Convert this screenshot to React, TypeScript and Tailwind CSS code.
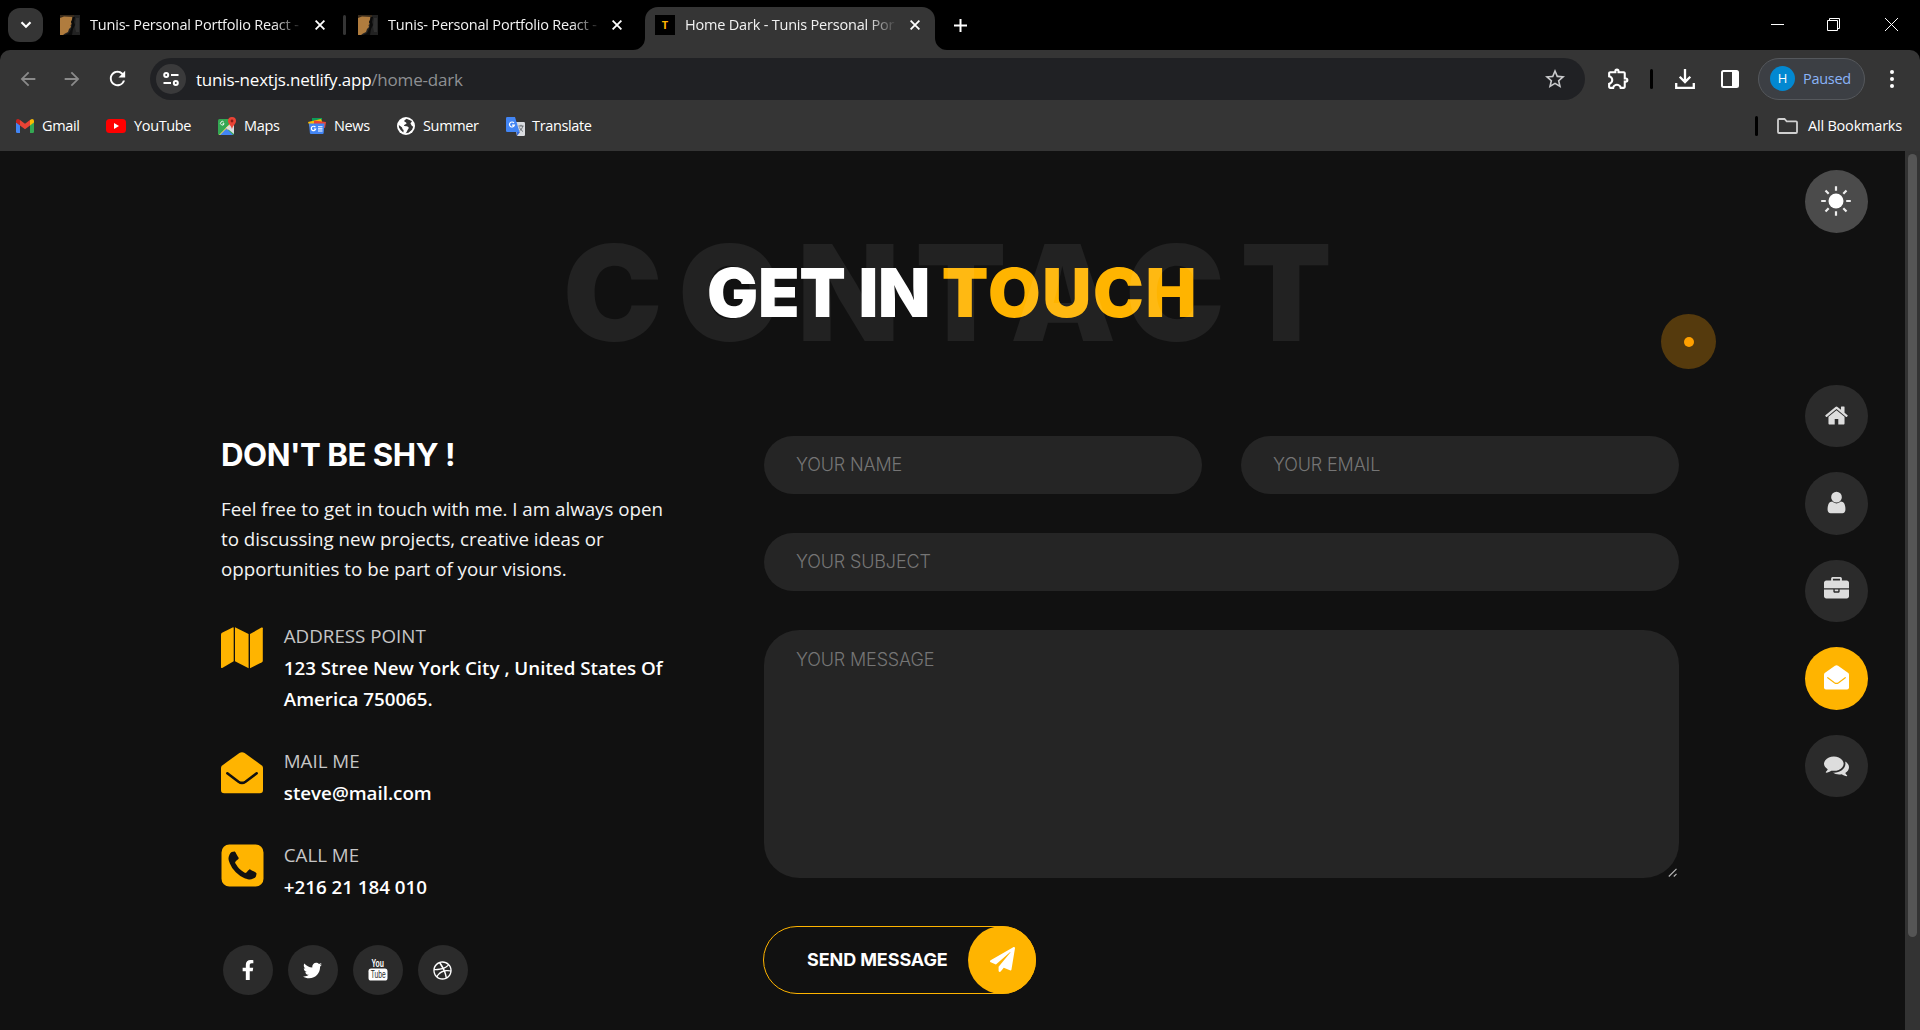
import React from 'react';
import { FaDribbble, FaFacebookF, FaPaperPlane, FaTwitter } from 'react-icons/fa';
import {
  MdArrowBack,
  MdArrowForward,
  MdOutlineExtension,
  MdRefresh,
  MdStarBorder,
} from 'react-icons/md';

const UI_FONT = "font-['Open_Sans','Noto_Sans',sans-serif]";
const HEAD_FONT = "font-['Inter',sans-serif]";

const HOME =
  'M1472 992v480q0 26-19 45t-45 19h-384v-384h-256v384h-384q-26 0-45-19t-19-45v-480q0-1 .5-3t.5-3l575-474 575 474q1 2 1 6zm223-69l-62 74q-8 9-21 11h-3q-13 0-21-7l-692-577-692 577q-12 8-24 7-13-2-21-11l-62-74q-8-10-7-23.5t11-21.5l719-599q32-26 76-26t76 26l244 204v-195q0-14 9-23t23-9h192q14 0 23 9t9 23v408l219 182q10 8 11 21.5t-7 23.5z';
const USER =
  'M1536 1399q0 109-62.5 187t-150.5 78h-854q-88 0-150.5-78t-62.5-187q0-85 8.5-160.5t31.5-152 58.5-131 94-89 134.5-34.5q131 128 313 128t313-128q76 0 134.5 34.5t94 89 58.5 131 31.5 152 8.5 160.5zm-256-887q0 159-112.5 271.5t-271.5 112.5-271.5-112.5-112.5-271.5 112.5-271.5 271.5-112.5 271.5 112.5 112.5 271.5z';
const BRIEFCASE =
  'M640 256h512v-128h-512v128zm1152 640v480q0 66-47 113t-113 47h-1472q-66 0-113-47t-47-113v-480h672v160q0 26 19 45t45 19h320q26 0 45-19t19-45v-160h672zm-768 0v128h-256v-128h256zm768-480v384h-1792v-384q0-66 47-113t113-47h352v-160q0-40 28-68t68-28h576q40 0 68 28t28 68v160h352q66 0 113 47t47 113z';
const COMMENTS =
  'M1408 768q0 139-94 257t-256.5 186.5-353.5 68.5q-86 0-176-16-124 88-278 128-36 9-86 16h-3q-11 0-20.5-8t-11.5-21q-1-3-1-6.5t.5-6.5 2-6l2.5-5 3.5-5.5 4-5 4.5-5 4-4.5q5-6 23-25t26-29.5 22.5-29 25-38.5 20.5-44q-124-72-195-177t-71-224q0-139 94-257t256.5-186.5 353.5-68.5 353.5 68.5 256.5 186.5 94 257zm384 256q0 120-71 224.5t-195 176.5q10 24 20.5 44t25 38.5 22.5 29 26 29.5 23 25q1 1 4 4.5t4.5 5 4 5 3.5 5.5l2.5 5 2 6 .5 6.5-1 6.5q-3 14-13 22t-22 7q-50-7-86-16-154-40-278-128-90 16-176 16-271 0-472-132 58 4 88 4 161 0 309-45t264-129q125-92 192-212t67-254q0-77-23-152 129 71 204 178t75 230z';
const PHONE_SQUARE =
  'M1408 1193q0-11-2-16t-18-16.5-40.5-25-47.5-26.5-45.5-25-28.5-15q-5-3-19-13t-25-15-21-5q-15 0-36.5 20.5t-39.5 45-38.5 45-33.5 20.5q-7 0-16.5-3.5t-15.5-6.5-17-9.5-14-8.5q-99-55-170-126.5t-127-170.5q-2-3-8.5-14t-9.5-17-6.5-15.5-3.5-16.5q0-13 20.5-33.5t45-38.5 45-39.5 20.5-36.5q0-10-5-21t-15-25-13-19q-3-6-15-28.5t-25-45.5-26.5-47.5-25-40.5-16.5-18-16-2q-48 0-101 22-46 21-80 94.5t-34 130.5q0 16 2.5 34t5 30.5 9 33 10 29.5 12.5 33 11 30q60 164 216.5 320.5t320.5 216.5q6 2 30 11t33 12.5 29.5 10 33 9 30.5 5 34 2.5q57 0 130.5-34t94.5-80q22-53 22-101zm256-777v960q0 119-84.5 203.5t-203.5 84.5h-960q-119 0-203.5-84.5t-84.5-203.5v-960q0-119 84.5-203.5t203.5-84.5h960q119 0 203.5 84.5t84.5 203.5z';

function Glyph({ d, className }: { d: string; className: string }) {
  return (
    <svg viewBox="0 0 1792 1792" className={className} fill="currentColor">
      <path d={d} />
    </svg>
  );
}

function OpenEnvelope({ className, line, weight }: { className: string; line: string; weight: number }) {
  return (
    <svg viewBox="0 0 42 42" className={className}>
      <path
        fill="currentColor"
        d="M0 15.8Q0 14.4 1.2 13.4L18.4 1.1Q21-.6 23.6 1.1L40.8 13.4Q42 14.4 42 15.8V38Q42 41.3 38.7 41.3H3.3Q0 41.3 0 38Z"
      />
      <path
        d="M6.3 21.3L17.5 29.7Q21 32.2 24.5 29.7L35.7 21.3"
        fill="none"
        stroke={line}
        strokeWidth={weight}
        strokeLinecap="round"
      />
    </svg>
  );
}

function FoldedMap() {
  return (
    <svg viewBox="0 0 42 42" className="size-[42px]" fill="currentColor">
      <path d="M0 7.5Q0 6.3 1 5.7L11.6.4Q12.7 0 12.7 1V34.3L1.2 40.9Q0 41.5 0 40.3Z" />
      <path d="M14 .2L27.6 7V41.2L14 34.2Z" />
      <path d="M29 7L40.5.6Q41.8 0 41.8 1.2V33.8Q41.8 34.8 40.9 35.3L29 41.2Z" />
    </svg>
  );
}

function YouTubeStack() {
  return (
    <svg
      viewBox="0 0 20 22"
      className="mr-px h-[22px] w-5 overflow-visible"
      fontFamily="'Liberation Sans', sans-serif"
      fontWeight="700"
    >
      <text x="3.5" y="8.3" fontSize="10.5" fill="#fff" textLength="12.5" lengthAdjust="spacingAndGlyphs">
        You
      </text>
      <rect x=".5" y="9.6" width="19" height="12" rx="2.6" fill="#fff" />
      <text x="2.7" y="19.4" fontSize="10.5" fontWeight="400" fill="#2a2a2a" textLength="15" lengthAdjust="spacingAndGlyphs">
        Tube
      </text>
    </svg>
  );
}

function CloseIcon() {
  return (
    <svg viewBox="0 0 10 10" className="size-2.5 shrink-0" stroke="#fff" strokeWidth="1.8">
      <path d="M.6.6l8.8 8.8M9.4.6L.6 9.4" />
    </svg>
  );
}

function PortraitIcon() {
  return (
    <svg viewBox="0 0 20 20" className="size-5 shrink-0">
      <rect width="20" height="20" fill="#222" />
      <path d="M0 2l3-1h10l-1 2 1 2-2 2 1.5 1.5-2 1.5.5 2-2 2-1 3-3 1.5L3 20H0z" fill="#b07c3e" />
      <path d="M0 0h14v2L4 1.5 0 3z" fill="#3a2c1c" />
      <path d="M13 2h2l-1 5 1 3-2 4-1 6H5l4-2 2-4 1-4-1-3z" fill="#0b0b0b" />
      <path d="M16 3h3v14h-3l-1-5z" fill="#303030" />
    </svg>
  );
}

function TabTitle({ text, className }: { text: string; className: string }) {
  return (
    <span
      className={`${className} whitespace-nowrap text-[14.5px] leading-5 tracking-[-0.2px] text-[#f2f2f2] [mask-image:linear-gradient(to_right,#000_86%,transparent)]`}
    >
      {text}
    </span>
  );
}

function TabStrip() {
  return (
    <div className="flex h-[50px] items-start bg-black">
      <div className="mt-2 ml-2 flex h-[34px] w-[35px] items-center justify-center rounded-xl bg-[#353535]">
        <svg viewBox="0 0 12 8" className="mb-px h-2 w-3" fill="none" stroke="#fff" strokeWidth="2.2">
          <path d="M1.5 1.3L6 5.8l4.5-4.5" />
        </svg>
      </div>
      <div className="ml-[17px] flex h-[50px] w-[283px] items-center">
        <PortraitIcon />
        <TabTitle text="Tunis- Personal Portfolio React -" className="ml-[10px] w-[213px]" />
        <span className="ml-[12px] flex">
          <CloseIcon />
        </span>
      </div>
      <div className="mt-[15px] h-5 w-[3px] rounded-full bg-[#353535]" />
      <div className="ml-[12px] flex h-[50px] w-[276px] items-center">
        <PortraitIcon />
        <TabTitle text="Tunis- Personal Portfolio React -" className="ml-[10px] w-[213px]" />
        <span className="ml-[11px] flex">
          <CloseIcon />
        </span>
      </div>
      <svg viewBox="0 0 12 12" className="-ml-px mt-[38px] size-3" fill="#353535">
        <path d="M0 12A12 12 0 0 0 12 0V12z" />
      </svg>
      <div className="mt-[7px] flex h-[43px] w-[290px] items-center rounded-t-[13px] bg-[#353535] pb-[7px] pl-2.5">
        <span className="flex size-5 items-center justify-center bg-black text-[11px] font-bold text-[#ffb400]">T</span>
        <TabTitle text="Home Dark - Tunis Personal Por" className="ml-2.5 w-[212px]" />
        <span className="ml-[13px] flex">
          <CloseIcon />
        </span>
      </div>
      <svg viewBox="0 0 12 12" className="mt-[38px] size-3" fill="#353535">
        <path d="M12 12A12 12 0 0 1 0 0V12z" />
      </svg>
      <svg viewBox="0 0 13 13" className="mt-[18.5px] ml-[7px] size-[13px]" stroke="#fff" strokeWidth="2">
        <path d="M6.5 0v13M0 6.5h13" />
      </svg>
      <div className="mt-[18px] mr-[22px] ml-auto flex items-center">
        <svg viewBox="0 0 13 13" className="size-[13px]" stroke="#fff">
          <path d="M0 6.5h13" />
        </svg>
        <svg viewBox="0 0 13 13" className="ml-[43px] size-[13px]" stroke="#fff" fill="none">
          <path d="M.5 2.5h10v10H.5zM2.5 2.5v-2h10v10h-2" />
        </svg>
        <svg viewBox="0 0 13 13" className="ml-[45px] size-[13px]" stroke="#fff">
          <path d="M0 0l13 13M13 0L0 13" />
        </svg>
      </div>
    </div>
  );
}

function Toolbar() {
  return (
    <div className="flex h-[57px] items-center">
      <MdArrowBack className="ml-[17px] size-[22px] text-[#8a8a8a]" />
      <MdArrowForward className="ml-[22px] size-[22px] text-[#8a8a8a]" />
      <MdRefresh className="ml-[23px] size-[23px] text-white" />
      <div className="ml-[21px] flex h-[42px] w-[1435px] items-center rounded-full bg-[#202124]">
        <span className="ml-[6px] flex size-[30px] items-center justify-center rounded-full bg-[#3a3a3b]">
          <svg viewBox="0 0 16 14" className="h-3.5 w-4" fill="none" stroke="#fff" strokeWidth="2">
            <circle cx="3.2" cy="3" r="2" />
            <path d="M8 3h7.5M.5 11H8" />
            <circle cx="12.8" cy="11" r="2" />
          </svg>
        </span>
        <span className="mt-0.5 ml-[10px] whitespace-nowrap text-[17px] leading-6 tracking-[-0.2px] text-white">
          tunis-nextjs.netlify.app<span className="text-[#8e9093]">/home-dark</span>
        </span>
        <MdStarBorder className="mr-[18px] ml-auto size-6 text-[#c9cacc]" />
      </div>
      <MdOutlineExtension className="ml-[21px] size-[25px] text-white" />
      <div className="ml-[19px] h-5 w-[3px] rounded-full bg-black" />
      <svg viewBox="0 0 20 20" className="ml-[22px] size-5" fill="none" stroke="#fff" strokeWidth="2.3">
        <path d="M10 0v12.5M4.7 7.7L10 13l5.3-5.3M1.2 14v4.8h17.6V14" />
      </svg>
      <svg viewBox="0 0 18 18" className="ml-[26px] h-[18px] w-[18px]">
        <rect x="1" y="1" width="16" height="16" rx="1.5" fill="none" stroke="#fff" strokeWidth="2" />
        <path d="M11 1h6v16h-6z" fill="#fff" />
      </svg>
      <div className="ml-[19px] flex h-[42px] w-[107px] items-center rounded-full border border-[#55585c] bg-[#3c3f44] pl-[11px]">
        <span className="flex size-[25px] items-center justify-center rounded-full bg-[#0288d1] text-[13px] text-white">H</span>
        <span className="ml-[8px] text-[14.5px] tracking-[-0.3px] text-[#8ab4f8]">Paused</span>
      </div>
      <svg viewBox="0 0 4 18" className="ml-[25px] h-[18px] w-1" fill="#fff">
        <circle cx="2" cy="2" r="2" />
        <circle cx="2" cy="9" r="2" />
        <circle cx="2" cy="16" r="2" />
      </svg>
    </div>
  );
}

function Bookmark({ label, className, children }: { label: string; className: string; children: React.ReactNode }) {
  return (
    <div className={`flex items-center gap-2 ${className}`}>
      {children}
      <span className="whitespace-nowrap text-[14.5px] leading-5 tracking-[-0.35px] text-white">{label}</span>
    </div>
  );
}

function BookmarksBar() {
  return (
    <div className="flex h-[44px] items-center pb-1.5 pl-4">
      <Bookmark label="Gmail" className="w-[90px]">
        <svg viewBox="0 0 18 14" className="h-3.5 w-[18px]">
          <path d="M0 3v9.8Q0 14 1.2 14H4V6z" fill="#4285f4" />
          <path d="M14 6v8h2.8Q18 14 18 12.8V3z" fill="#34a853" />
          <path d="M14 1v5.5l4-3V2q0-2-2-2z" fill="#fbbc04" />
          <path d="M4 6.5V1l5 3.8L14 1v5.5l-5 3.7z" fill="#ea4335" />
          <path d="M0 2v1.5l4 3V1L2.8.2Q0-.3 0 2z" fill="#c5221f" />
        </svg>
      </Bookmark>
      <Bookmark label="YouTube" className="w-[112px]">
        <svg viewBox="0 0 20 14" className="h-3.5 w-5">
          <rect width="20" height="14" rx="3.5" fill="#f00" />
          <path d="M8 4v6l5-3z" fill="#fff" />
        </svg>
      </Bookmark>
      <Bookmark label="Maps" className="w-[90px]">
        <svg viewBox="0 0 18 19" className="h-[19px] w-[18px]">
          <rect y="2" width="16" height="16" rx="1.5" fill="#34a853" />
          <path d="M1 18L15 3.5l1 2V7L5 18z" fill="#fdd663" />
          <path d="M8 10.5l8-5v11.5z" fill="#dadce0" />
          <path d="M2 18l6.5-6.5L15 18z" fill="#4285f4" />
          <path d="M14 0a4 4 0 0 1 4 4c0 3-3 4-4 8-1-4-4-5-4-8a4 4 0 0 1 4-4z" fill="#ea4335" />
          <circle cx="14" cy="4" r="1.4" fill="#8c1d18" />
          <path d="M5.8 5.2a1.8 1.8 0 1 0 .3 1.5H4.6" fill="none" stroke="#fff" strokeWidth=".9" />
        </svg>
      </Bookmark>
      <Bookmark label="News" className="w-[89px]">
        <svg viewBox="0 0 18 16" className="h-4 w-[18px]">
          <path d="M4 0h10v6H4z" fill="#0c9d58" />
          <path d="M0 4l13-3L15 6 2 9z" fill="#fbbc04" />
          <path d="M6 2.5L18 4l-1 6-11-3z" fill="#ea4335" />
          <path d="M1 5.5h15.5L15.7 15q-.1 1-1 1H3q-1 0-1.1-1z" fill="#4285f4" />
          <path d="M7.4 9.2a2.2 2.2 0 1 0 .3 1.8H5.9" fill="none" stroke="#fff" strokeWidth="1.2" />
          <path d="M10 8.7h4.5M10 10.9h4.5M10 13h4.5" stroke="#fff" strokeWidth="1.1" />
        </svg>
      </Bookmark>
      <Bookmark label="Summer" className="w-[109px]">
        <svg viewBox="0 0 18 18" className="size-[18px]">
          <circle cx="9" cy="9" r="9" fill="#fff" />
          <path
            d="M9.5 1.8c-1 1.2-2 1-2.2 2.2 0 1.4 2 .8 2.2 2.2 0 1.3-2 1-2.4 2-.3 1.2 3.4.8 4.4 2 .8 1.2-.6 2-1.2 3.2-.4 1-.8 2-1.8 2.8l3-.5 3.5-3 1.2-3-1.4-1-1.3-2.2c.3-1.200 1.5-1 1.3-2.4z"
            fill="#353535"
          />
          <path d="M1.8 8l3 2.2c.9.8.2 1.8 1.3 2.4.8.5.5 2 .2 2.8L3.6 13 2 10.5z" fill="#353535" />
        </svg>
      </Bookmark>
      <Bookmark label="Translate" className="">
        <svg viewBox="0 0 19 19" className="-mr-px size-[19px]">
          <path d="M8 5h9.8Q19 5 19 6.2v11.6Q19 19 17.8 19H11z" fill="#dadce0" />
          <path d="M10.5 15h3.5l-3 4z" fill="#3367d6" />
          <path d="M1.2 0H9l4.5 15H1.2Q0 15 0 13.8V1.2Q0 0 1.2 0z" fill="#4285f4" />
          <path d="M8 6a2.5 2.5 0 1 0 .4 2.2H6" fill="none" stroke="#fff" strokeWidth="1.2" />
          <path
            d="M12.5 9h5M15 7.8V9M16.8 9c-.5 2.5-2 4-3.3 5M13.6 10.5c.8 2 2.2 3.2 3.4 4"
            fill="none"
            stroke="#5f6368"
            strokeWidth=".9"
          />
        </svg>
      </Bookmark>
      <div className="mr-[19px] ml-auto h-5 w-[3px] rounded-full bg-black" />
      <svg viewBox="0 0 21 16" className="mr-[10px] h-4 w-[21px]" fill="none" stroke="#d0d0d0" strokeWidth="1.8">
        <path d="M1 2Q1 1 2 1h5.5l2.2 2.3H19q1 0 1 1V14q0 1-1 1H2q-1 0-1-1z" />
      </svg>
      <span className="mr-[18px] whitespace-nowrap text-[14.5px] leading-5 tracking-[-0.2px] text-white">All Bookmarks</span>
    </div>
  );
}

function Contact({ icon, title, lines }: { icon: React.ReactNode; title: string; lines: string[] }) {
  return (
    <div className="flex text-[18.75px]">
      <div className="w-[62.75px] shrink-0 pt-[7px] text-[#ffb400]">{icon}</div>
      <div>
        <div className="h-8 leading-[31px] text-[#c6c6c6]">{title}</div>
        {lines.map((line) => (
          <div key={line} className="whitespace-nowrap leading-[31px] font-semibold text-white">
            {line}
          </div>
        ))}
      </div>
    </div>
  );
}

function Social({ children }: { children: React.ReactNode }) {
  return <div className="flex size-[50px] items-center justify-center rounded-full bg-[#2b2b2b] text-white">{children}</div>;
}

function NavButton({ active, children }: { active?: boolean; children: React.ReactNode }) {
  return (
    <div
      className={`flex size-[62.5px] items-center justify-center rounded-full ${
        active ? 'bg-[#ffb400] text-white' : 'bg-[#2b2b2b] text-[#ddd]'
      }`}
    >
      {children}
    </div>
  );
}

const FIELD = 'flex items-center rounded-full bg-[#252525] pl-8 pb-px h-[58px]';

export default function App() {
  return (
    <div className={`flex h-[1030px] w-[1920px] flex-col overflow-hidden bg-black ${UI_FONT}`}>
      <TabStrip />
      <div className="h-[101px] shrink-0 rounded-t-[10px] bg-[#353535]">
        <Toolbar />
        <BookmarksBar />
      </div>

      <div className="relative flex grow bg-[#111]">
        <main className="w-[1805px]">
          <h1 className={`relative h-[285px] ${HEAD_FONT}`}>
            <div className="pt-[100px] pl-[707px] text-[68px] leading-[82px] font-black whitespace-nowrap text-white">
              <span className="inline-block w-[234.8px] tracking-[-0.4px]">GET IN</span>
              <span className="tracking-[1.7px] text-[#ffb400]">TOUCH</span>
            </div>
            <div className="absolute top-[61px] left-[563px] text-[133px] leading-[161px] font-black tracking-[15.8px] whitespace-nowrap text-white/[0.071]">
              CONTACT
            </div>
          </h1>

          <div className="flex pl-[221px]">
            <section className="w-[543px]">
              <h2
                className={`text-[31.25px] leading-[38px] font-bold tracking-[-0.5px] whitespace-nowrap text-white ${HEAD_FONT}`}
              >
                DON'T BE SHY !
              </h2>
              <p className="mt-[20px] w-[460px] text-[18.75px] leading-[30px] text-[#f4f4f4]">
                Feel free to get in touch with me. I am always open to discussing new projects, creative ideas or
                opportunities to be part of your visions.
              </p>
              <div className="mt-9 flex flex-col gap-[31px]">
                <Contact
                  icon={<FoldedMap />}
                  title="ADDRESS POINT"
                  lines={['123 Stree New York City , United States Of', 'America 750065.']}
                />
                <Contact
                  icon={<OpenEnvelope className="size-[42px]" line="#111" weight={2.6} />}
                  title="MAIL ME"
                  lines={['steve@mail.com']}
                />
                <Contact
                  icon={<Glyph d={PHONE_SQUARE} className="-mt-[5px] -ml-[3.5px] size-[49px]" />}
                  title="CALL ME"
                  lines={['+216 21 184 010']}
                />
              </div>
              <div className="mt-[43px] ml-0.5 flex gap-[15px]">
                <Social>
                  <FaFacebookF className="mr-px size-5" />
                </Social>
                <Social>
                  <FaTwitter className="mr-px size-[19px]" />
                </Social>
                <Social>
                  <YouTubeStack />
                </Social>
                <Social>
                  <FaDribbble className="mr-px size-[19px]" />
                </Social>
              </div>
            </section>

            <form className={`w-[915px] text-[18px] font-light tracking-[-0.15px] text-[#757575] ${HEAD_FONT}`}>
              <div className="flex gap-[39px]">
                <div className={`${FIELD} w-[438px]`}>YOUR NAME</div>
                <div className={`${FIELD} w-[438px]`}>YOUR EMAIL</div>
              </div>
              <div className={`${FIELD} mt-[39px]`}>YOUR SUBJECT</div>
              <div className="relative mt-[39px] h-[248px] rounded-[35px] bg-[#252525] pt-[19px] pl-8 leading-[22px]">
                YOUR MESSAGE
                <svg viewBox="0 0 9 9" className="absolute right-[2px] bottom-px size-[9px]" stroke="#b5b5b5" strokeWidth="1.2">
                  <path d="M.8 8.5L8.5.8M5.8 8.5l2.7-2.7" />
                </svg>
              </div>
              <div className="mt-[48px] -ml-px flex h-[68px] w-[273px] items-center justify-between rounded-full border border-[#ffb400] pl-[43px] font-bold text-white">
                <span className="mb-px tracking-[-0.1px] whitespace-nowrap">SEND MESSAGE</span>
                <span className="-mr-px flex size-[68px] items-center justify-center rounded-full bg-[#ffb400]">
                  <FaPaperPlane className="mb-px size-[25px]" />
                </span>
              </div>
            </form>
          </div>
        </main>

        <nav className="flex w-[100px] flex-col gap-[25px] pt-[19px]">
          <div className="mb-[127px] flex size-[62.5px] items-center justify-center rounded-full bg-[#4b4b4b]">
            <svg viewBox="-15 -15 30 30" className="size-[30px]" stroke="#eee" strokeWidth="2.2">
              <circle r="7.5" fill="#fff" stroke="none" />
              <path d="M0-14.8v4.6M0 10.2v4.6M-14.8 0h4.6M10.2 0h4.6M-10.5-10.5l3.2 3.2M7.3 7.3l3.2 3.2M-10.5 10.5l3.2-3.2M7.3-7.3l3.2-3.2" />
            </svg>
          </div>
          <NavButton>
            <Glyph d={HOME} className="mb-px size-[25px]" />
          </NavButton>
          <NavButton>
            <Glyph d={USER} className="mb-px size-[25px]" />
          </NavButton>
          <NavButton>
            <Glyph d={BRIEFCASE} className="mb-[3px] size-[25px]" />
          </NavButton>
          <NavButton active>
            <OpenEnvelope className="mb-px size-[25px]" line="#ffb400" weight={2} />
          </NavButton>
          <NavButton>
            <Glyph d={COMMENTS} className="mb-px size-[25px]" />
          </NavButton>
        </nav>

        <div className="flex w-[15px] justify-center bg-[#333] pt-[3px]">
          <div className="h-[783px] w-[9px] rounded-full bg-[#555]" />
        </div>

        <div className="absolute top-[163px] left-[1661px] flex size-[55px] items-center justify-center rounded-full bg-[#553a0d]">
          <div className="size-2.5 rounded-full bg-[#ffa000]" />
        </div>
      </div>
    </div>
  );
}
